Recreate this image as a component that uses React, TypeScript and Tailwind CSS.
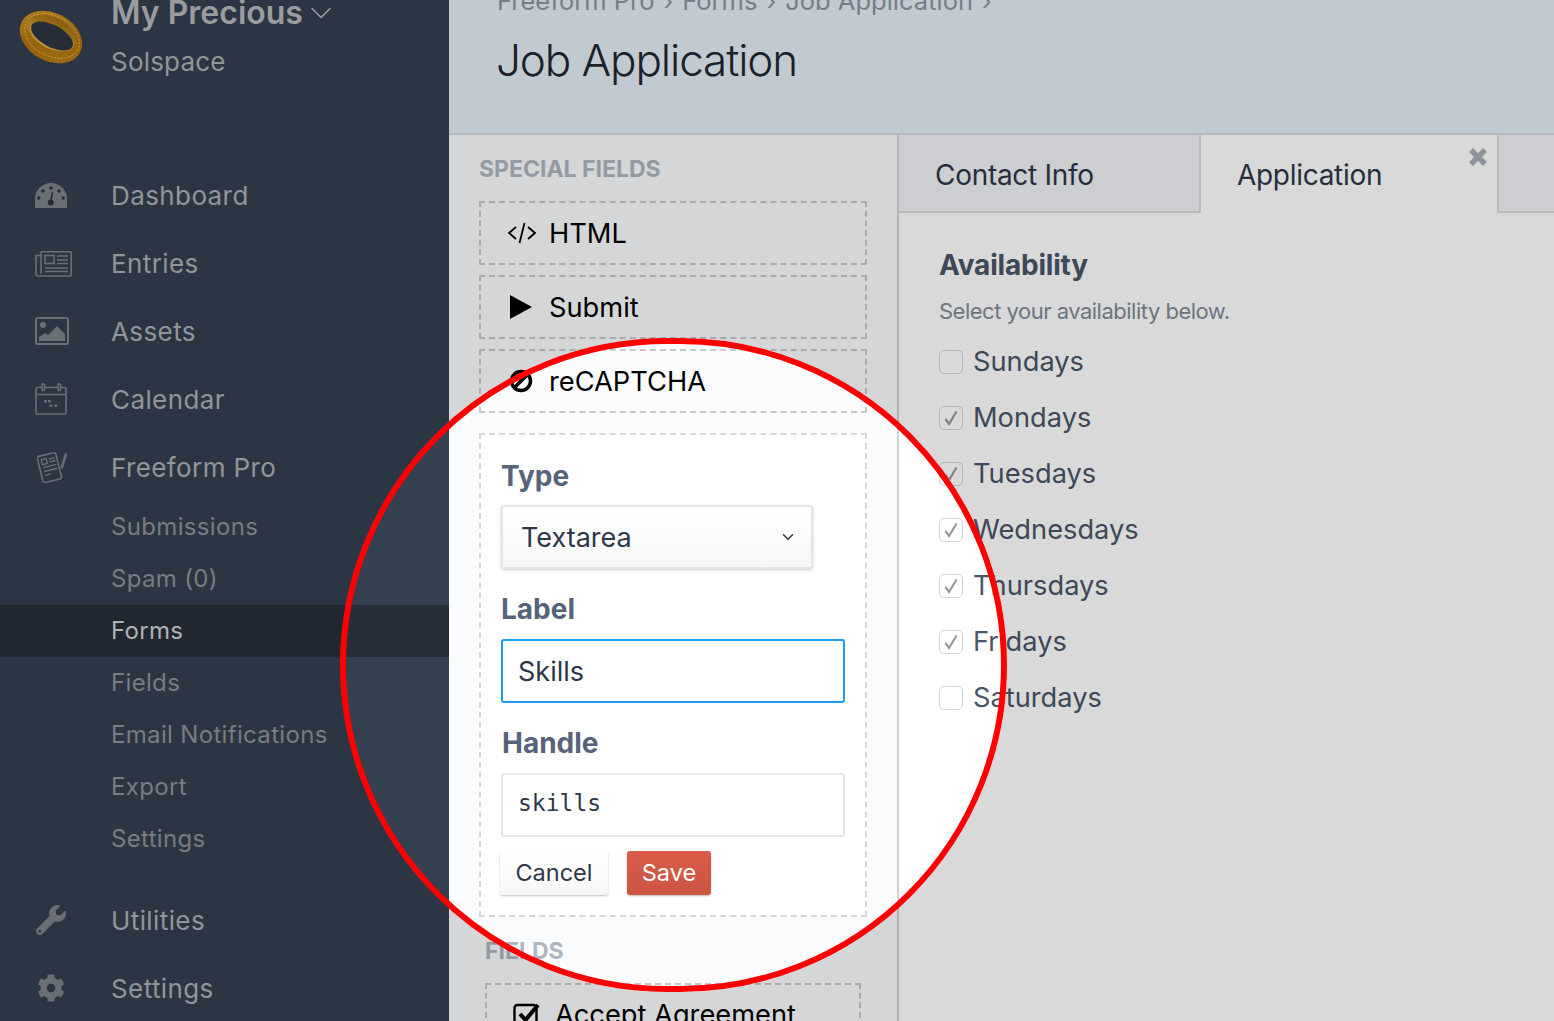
import { ChevronDown } from "lucide-react";
import { FaCog, FaWrench } from "react-icons/fa";

const inter = { fontFamily: "Inter, sans-serif" };
const bg = "#2d3644";

function Ring() {
  return (
    <svg viewBox="0 0 64 56" className="h-14 w-16 shrink-0">
      <defs>
        <linearGradient id="gold" x1="0" y1="0" x2="1" y2="1">
          <stop offset="0" stopColor="#d39a28" />
          <stop offset="0.55" stopColor="#b0740f" />
          <stop offset="1" stopColor="#bd8218" />
        </linearGradient>
        <linearGradient id="goldInner" x1="0" y1="0" x2="0" y2="1">
          <stop offset="0" stopColor="#a06c0e" />
          <stop offset="1" stopColor="#e2b040" />
        </linearGradient>
      </defs>
      <ellipse cx="32" cy="28" rx="33" ry="24" transform="rotate(28 32 28)" fill="url(#gold)" />
      <ellipse cx="33" cy="27" rx="29" ry="20" transform="rotate(28 33 27)" fill="none" stroke="#e8c468" strokeWidth="0.8" strokeDasharray="2 1.500" />
      <ellipse cx="33" cy="24" rx="26" ry="15.500" transform="rotate(28 33 24)" fill="url(#goldInner)" />
      <ellipse cx="33" cy="27" rx="23" ry="11" transform="rotate(28 33 27)" fill={bg} />
    </svg>
  );
}

function GaugeIcon() {
  return (
    <svg viewBox="0 0 32 25" className="h-[25px] w-8" fill="currentColor">
      <path d="M0 25V16A16 16 0 0 1 32 16V25z" />
      <g fill={bg}>
        <circle cx="16" cy="5" r="1.700" />
        <circle cx="8" cy="8" r="1.700" />
        <circle cx="24" cy="8" r="1.700" />
        <circle cx="3.800" cy="15" r="1.700" />
        <circle cx="28.200" cy="15" r="1.700" />
        <circle cx="15.700" cy="19.500" r="3" />
        <path d="M14.700 19l2-10 1.500.3-1.500 10z" />
      </g>
    </svg>
  );
}

function NewspaperIcon() {
  return (
    <svg viewBox="0 0 37 27" className="h-[27px] w-[37px]" fill="none" stroke="currentColor" strokeWidth="1.600">
      <path d="M6 1.800h29.500a.7.7 0 0 1 .7.7v22.500a1 1 0 0 1-1 1H3a2 2 0 0 1-2-2V5.500h5" />
      <path d="M6 2v22" />
      <rect x="10" y="5.500" width="9" height="8" />
      <path d="M22 6h11M22 10h11M22 13.500h11M10 18h23M10 21.500h23" />
    </svg>
  );
}

function ImageIcon() {
  return (
    <svg viewBox="0 0 34 28" className="h-7 w-[34px]" fill="currentColor">
      <rect x="1" y="1" width="32" height="26" rx="1.500" fill="none" stroke="currentColor" strokeWidth="2" />
      <circle cx="8" cy="8" r="3" />
      <path d="M4 24v-4l6-4 3 2 9-9 8 8v7z" />
    </svg>
  );
}

function CalendarIcon() {
  return (
    <svg viewBox="0 0 32 32" className="h-8 w-8" fill="none" stroke="currentColor" strokeWidth="1.600">
      <rect x="1" y="4.500" width="30" height="26.500" rx="1.500" />
      <path d="M1 11.500h30" />
      <rect x="7" y="0.800" width="2.500" height="7" rx="1.200" fill={bg} />
      <rect x="23" y="0.800" width="2.500" height="7" rx="1.200" fill={bg} />
      <path d="M9 17h2.800v2.500H9zM13 17h2.800v2.500H13zM14.500 21.500h2.800V24h-2.800zM19.500 21.500h2.800V24h-2.800z" fill="currentColor" stroke="none" />
    </svg>
  );
}

function FormIcon() {
  return (
    <svg viewBox="0 0 30 32" className="ml-[2px] h-8 w-[30px]" fill="none" stroke="currentColor">
      <g transform="rotate(-14 13 17)">
        <rect x="3" y="3" width="19" height="27" rx="2" strokeWidth="1.600" />
        <path d="M6.500 7h5v5h-5zM14 8h6M14 11h6M6.500 15h13.500M6.500 19h13.500M6.500 23h6" strokeWidth="1.400" />
      </g>
      <path d="M29 2.500l-4.500 15" strokeWidth="2.600" />
    </svg>
  );
}

function MainItem({ icon, label }: { icon: React.ReactNode; label: string }) {
  return (
    <div className="flex h-[68px] items-center text-[26px] tracking-[0.4px] text-[#abb0b6]">
      <div className="flex w-[111px] shrink-0 pl-[35px] text-[#7d838b]">{icon}</div>
      {label}
    </div>
  );
}

function SubItem({ label, active }: { label: string; active?: boolean }) {
  return (
    <div className={`flex h-[52px] items-center pl-[111px] text-[24px] tracking-[0.33px] ${active ? "bg-[#262e3a] text-[#cfd2d6]" : "text-[#8d929a]"}`}>
      {label}
    </div>
  );
}

function Special({ icon, label }: { icon: React.ReactNode; label: string }) {
  return (
    <div className="flex h-16 items-center rounded-[2px] border-2 border-dashed border-[#c8c8c8] pl-[26px] text-[27.250px] text-black">
      <div className="flex w-[42px] shrink-0">{icon}</div>
      <span className="pt-[2px]">{label}</span>
    </div>
  );
}

function Day({ label, checked }: { label: string; checked?: boolean }) {
  return (
    <div className="flex h-14 items-center text-[27.250px] text-[#4a5568]">
      <div className="mr-[10px] mt-[2px] flex h-6 w-6 items-center justify-center rounded-[5px] border border-[#d4d4d4] bg-white">
        {checked && (
          <svg viewBox="0 0 16 16" className="h-4 w-4" fill="none" stroke="#9b9b9b" strokeWidth="2.200">
            <path d="M2.500 9l3.500 5L13.500 1.500" />
          </svg>
        )}
      </div>
      <span className="pt-[2px]">{label}</span>
    </div>
  );
}

export default function App() {
  return (
    <div className="relative flex h-[1021px] w-[1554px] overflow-hidden bg-white" style={inter}>
      {/* sidebar */}
      <aside className="w-[449px] shrink-0 bg-[#343f4f]">
        <div className="flex h-[161px] pt-[9px] pl-[19px]">
          <Ring />
          <div className="ml-[28px] mt-[-19px]">
            <div className="flex items-center text-[32px] font-semibold leading-[46px] text-[#b4b8bd]">
              My Precious
              <ChevronDown className="h-9 w-9" strokeWidth={1.100} />
            </div>
            <div className="mt-[10px] text-[26px] leading-8 tracking-[0.2px] text-[#abb0b6]">Solspace</div>
          </div>
        </div>
        <MainItem icon={<GaugeIcon />} label="Dashboard" />
        <MainItem icon={<NewspaperIcon />} label="Entries" />
        <MainItem icon={<ImageIcon />} label="Assets" />
        <MainItem icon={<CalendarIcon />} label="Calendar" />
        <MainItem icon={<FormIcon />} label="Freeform Pro" />
        <div>
          <SubItem label="Submissions" />
          <SubItem label="Spam (0)" />
          <SubItem label="Forms" active />
          <SubItem label="Fields" />
          <SubItem label="Email Notifications" />
          <SubItem label="Export" />
          <SubItem label="Settings" />
        </div>
        <div className="mt-[21px]">
          <MainItem icon={<FaWrench className="ml-[1px] h-[30px] w-[30px]" />} label="Utilities" />
          <MainItem icon={<FaCog className="ml-[2px] h-7 w-7" />} label="Settings" />
        </div>
      </aside>

      <main className="flex min-w-0 flex-1 flex-col">
        {/* page header */}
        <header className="h-[135px] shrink-0 border-b-2 border-[#d3d9df] bg-[#e4eef6] pl-12">
          <div className="mt-[-15px] flex items-center gap-[9px] text-[25.500px] leading-8 text-[#8b95a1]">
            <span>Freeform Pro</span>
            <span>›</span>
            <span>Forms</span>
            <span>›</span>
            <span>Job Application</span>
            <span>›</span>
          </div>
          <h1 className="ml-[-1px] mt-[15px] text-[44px] font-light leading-[56px] tracking-[-1.100px] text-[#1f2733]">Job Application</h1>
        </header>

        <div className="flex min-h-0 flex-1">
          {/* field palette */}
          <section className="w-[450px] shrink-0 border-r-2 border-[#d3d3d3] bg-[#fbfcfe] px-[30px] pt-5">
            <h2 className="mb-[18px] text-[23px] font-bold uppercase leading-7 text-[#aeb6c0]">Special Fields</h2>
            <div className="flex w-[388px] flex-col gap-2.5">
              <Special
                icon={
                  <svg viewBox="0 0 30 24" className="h-6 w-[30px]" fill="none" stroke="black" strokeWidth="1.800">
                    <path d="M9 6l-7 6 7 6M21 6l7 6-7 6M17.500 2l-5 20" />
                  </svg>
                }
                label="HTML"
              />
              <Special
                icon={
                  <svg viewBox="0 0 22 24" className="ml-[3px] h-6 w-[22px]" fill="black">
                    <path d="M0 0l22 12L0 24z" />
                  </svg>
                }
                label="Submit"
              />
              <Special
                icon={
                  <svg viewBox="0 0 24 24" className="ml-[2px] h-6 w-6" fill="none" stroke="black" strokeWidth="3.500">
                    <circle cx="12" cy="12" r="9.500" />
                    <path d="M5 19L19 5" />
                  </svg>
                }
                label="reCAPTCHA"
              />
            </div>
            <div className="mt-5 h-[484px] w-[388px] border-2 border-dashed border-[#d4d8dc] bg-white pl-5 pt-[21px]">
              <label className="block text-[28px] font-bold leading-10 text-[#56637a]">Type</label>
              <div className="mt-[9px] flex h-16 w-[312px] items-center justify-between rounded-[3px] border-2 border-[#e6e6e6] bg-gradient-to-b from-white to-[#f7f7f7] pl-[18px] pr-[14px] text-[27px] text-[#2d3748] shadow-[0_1px_3px_rgba(0,0,0,0.2)]">
                <span className="pt-[2px]">Textarea</span>
                <ChevronDown className="h-[18px] w-[18px]" strokeWidth={2} />
              </div>
              <label className="mt-5 block text-[28px] font-bold leading-10 text-[#56637a]">Label</label>
              <div className="mt-[10px] flex h-16 w-[344px] items-center rounded-[3px] border-2 border-[#1b9cf0] bg-white pl-[15px] pt-[2px] text-[27px] text-[#2d3748]">Skills</div>
              <label className="ml-px mt-5 block text-[28px] font-bold leading-10 text-[#56637a]">Handle</label>
              <div className="mt-[10px] flex h-16 w-[344px] items-center rounded-[3px] border-2 border-[#e6e6e6] bg-white pb-1 pl-[15px] text-[23px] text-[#2d3748]" style={{ fontFamily: '"DejaVu Sans Mono", monospace' }}>skills</div>
              <div className="mt-[14px] flex h-11 gap-[19px] text-[23.500px]">
                <button className="ml-[-1px] w-[108px] rounded-[3px] bg-gradient-to-b from-white to-[#f7f7f7] text-[#2d3748] shadow-[0_1px_2px_rgba(0,0,0,0.25)]">Cancel</button>
                <button className="w-[84px] rounded-[3px] bg-gradient-to-b from-[#d95c4b] to-[#cb5540] text-white shadow-[0_1px_2px_rgba(0,0,0,0.25)]">Save</button>
              </div>
            </div>
            <h2 className="mt-[20px] ml-[6px] text-[23px] font-bold uppercase leading-7 text-[#aeb6c0]">Fields</h2>
            <div className="mt-[18px] ml-[6px] flex h-16 w-[376px] items-center border-2 border-dashed border-[#c8c8c8] pl-[26px] text-[27.250px] text-black">
              <svg viewBox="0 0 28 28" className="mr-[14px] h-7 w-7" fill="none" stroke="black">
                <rect x="1.500" y="4" width="22" height="22" rx="3" strokeWidth="2.400" />
                <path d="M7 13l5.500 6L25 4" strokeWidth="4" />
              </svg>
              Accept Agreement
            </div>
          </section>

          {/* form preview */}
          <section className="min-w-0 flex-1 bg-white">
            <div className="flex h-[78px] pb-[2px] text-[28px] tracking-[-0.3px]">
              <div className="mb-[-2px] flex w-[302px] items-center border-r-2 border-b-2 border-[#d8dce0] bg-[#f1f3f6] pl-[36px] pt-[3px] text-[#2d3748]">Contact Info</div>
              <div className="relative flex w-[296px] items-center bg-white pl-[36px] pt-[3px] text-[#2d3748]">
                Application
                <svg viewBox="0 0 18 18" className="absolute top-[13px] right-[10px] h-[18px] w-[18px]" fill="none" stroke="#a8adb5" strokeWidth="5.500">
                  <path d="M2 2l14 14M16 2L2 16" />
                </svg>
              </div>
              <div className="mb-[-2px] flex-1 border-b-2 border-l-2 border-[#d8dce0] bg-[#f1f3f6]" />
            </div>
            <div className="pl-[40px] pt-[34px]">
              <h3 className="text-[28px] font-bold leading-9 tracking-[-0.2px] text-[#4a5568]">Availability</h3>
              <p className="mt-[12px] text-[22px] leading-8 tracking-[-0.5px] text-[#828a96]">Select your availability below.</p>
              <div className="mt-[6px]">
                <Day label="Sundays" />
                <Day label="Mondays" checked />
                <Day label="Tuesdays" checked />
                <Day label="Wednesdays" checked />
                <Day label="Thursdays" checked />
                <Day label="Fridays" checked />
                <Day label="Saturdays" />
              </div>
            </div>
          </section>
        </div>
      </main>

      {/* spotlight ring */}
      <div className="absolute top-[338px] left-[340px] h-[654px] w-[667px] rounded-full border-[6px] border-[#ff0000] shadow-[0_0_0_2000px_rgba(0,0,0,0.15)]" />
    </div>
  );
}
